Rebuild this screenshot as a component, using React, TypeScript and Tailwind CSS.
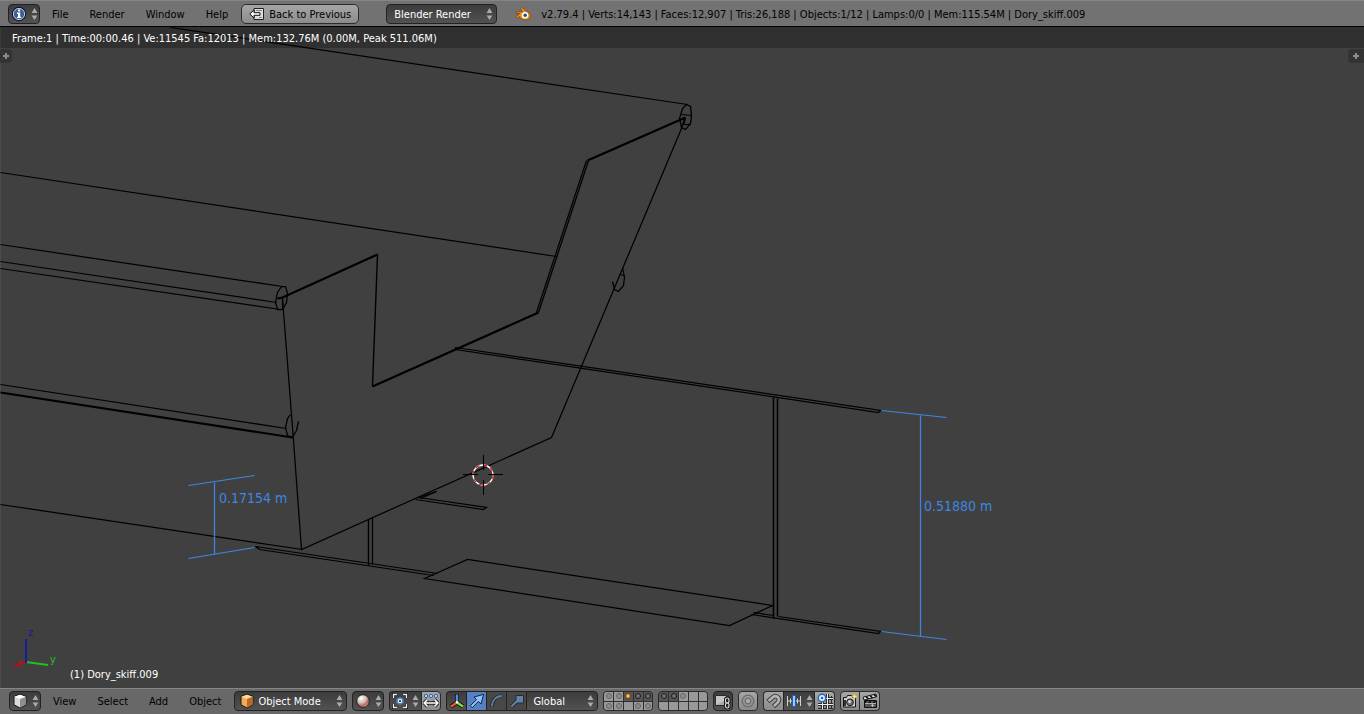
import { useState, type ReactNode } from 'react'
import clsx from 'clsx'

type Point = [number, number]

type Wire = {
  points: Point[]
  width?: number
  closed?: boolean
}

const INFO_MENUS = ['File', 'Render', 'Window', 'Help']
const VIEW_MENUS = ['View', 'Select', 'Add', 'Object']

const WIRES: Wire[] = [
  // gunwale and strakes
  { points: [[170, 27], [687, 104]] },
  { points: [[0, 172], [556, 256]] },
  { points: [[0, 244], [282, 286]] },
  { points: [[0, 261], [276, 302]] },
  { points: [[0, 268], [280, 309]] },
  { points: [[0, 384], [286, 428]] },
  { points: [[0, 392], [292, 437]], width: 2 },
  { points: [[0, 504], [302, 549]] },
  // transom
  { points: [[282, 298], [293, 440], [301, 549], [551, 437], [681, 128], [684, 118]] },
  { points: [[277, 298], [282, 297], [377, 254]], width: 2.2 },
  { points: [[377, 254], [372, 386]], width: 1.4 },
  { points: [[372, 386], [538, 312]], width: 2.2 },
  { points: [[536, 312], [586, 160]] },
  { points: [[538, 312], [588, 160]], width: 1.3 },
  { points: [[587, 160], [685, 117]], width: 2.4 },
  // rails
  { points: [[686, 104], [690, 106], [691, 115], [690, 123], [685, 129], [681, 127], [679, 118], [682, 108]], closed: true, width: 1.3 },
  { points: [[681, 114], [691, 115]] },
  { points: [[683, 124], [690, 124]] },
  { points: [[685, 118], [683, 124]] },
  { points: [[622, 267], [624, 277], [623, 285], [618, 291], [614, 289], [612, 281]] },
  { points: [[619, 274], [624, 275]] },
  { points: [[281, 286], [285, 286], [287, 293], [286, 302], [282, 309], [277, 309], [275, 302], [277, 292]], closed: true },
  { points: [[282, 298], [282, 309]] },
  { points: [[290, 414], [287, 418], [285, 427], [287, 435], [292, 437], [296, 430], [298, 421]] },
  // upper beam
  { points: [[455, 347], [880, 410], [878, 412], [455, 349]], closed: true },
  // posts
  { points: [[773, 397], [773, 618]], width: 1.6 },
  { points: [[777, 398], [777, 616]], width: 1.6 },
  { points: [[368, 519], [368, 565]], width: 1.4 },
  { points: [[372, 517], [372, 564]] },
  // foils
  { points: [[753, 612], [773, 615]] },
  { points: [[778, 616], [880, 631], [878, 633], [751, 614]] },
  { points: [[424, 578], [467, 559], [772, 605], [729, 625]], closed: true },
  { points: [[437, 573], [255, 546], [259, 549], [433, 575]] },
  { points: [[436, 491], [418, 497], [486, 507], [483, 509], [415, 499]] },
  { points: [[436, 491], [420, 498]] },
]

const DIMENSIONS: Wire[] = [
  { points: [[188, 485], [254, 475]] },
  { points: [[214, 482], [214, 554]] },
  { points: [[188, 558], [254, 547]] },
  { points: [[881, 410], [946, 417]] },
  { points: [[920, 415], [920, 636]] },
  { points: [[881, 631], [946, 639]] },
]

// e = empty, o = has objects, A = holds the active object; upper case = visible layer
const LAYER_BLOCKS = ['ooAOOooeoo', 'OOoeeeeeee']

const darkBtn =
  'flex h-5 shrink-0 items-center justify-center border border-[#222] bg-linear-to-b from-[#3c3c3c] to-[#525252] text-white'
const lightBtn =
  'flex h-5 shrink-0 items-center justify-center border border-[#2b2b2b] bg-linear-to-b from-[#a6a6a6] to-[#8c8c8c] text-black'

function Arrows() {
  return (
    <svg width="7" height="14" viewBox="0 0 7 14" className="shrink-0 fill-[#aaa]" aria-hidden="true">
      <path d="M3.5 1 6.4 6H.6zM3.5 13 .6 8.5h5.8z" />
    </svg>
  )
}

function Icon({ children }: { children: ReactNode }) {
  return (
    <svg width="16" height="16" viewBox="0 0 16 16" fill="none" className="shrink-0" aria-hidden="true">
      {children}
    </svg>
  )
}

function InfoIcon() {
  return (
    <Icon>
      <circle cx="8" cy="8" r="6.6" fill="#3c5e94" stroke="#101826" strokeWidth="1.2" />
      <circle cx="8" cy="8" r="5.6" stroke="#b9cbe6" />
      <path d="M7 3.6h2.200v1.900H7zM6 6.500h3.200v4.200h1v1.400H6v-1.400h1V7.900H6z" fill="#fff" />
    </Icon>
  )
}

function BackIcon() {
  return (
    <Icon>
      <path d="M5 2.5h9.5v11H5V10M5 6V2.5" fill="#ddd" stroke="#222" />
      <path d="M7 4.5h6M10 11.5h3" stroke="#888" />
      <path d="M.8 8 5 4v2.7h6v2.6H5V12z" fill="#fff" stroke="#111" />
    </Icon>
  )
}

function BlenderLogo() {
  return (
    <Icon>
      <path
        d="M6.8 1.6 15 7.6c1.8 3.4-.8 6.4-5 6.4-3 0-4.9-1.6-5.2-3.6l-2.6 1.8L.7 11l4.1-3.5H1.200V5.800h6.400L5.400 3z"
        fill="#ef8a1d"
        stroke="#6b3505"
        strokeWidth=".6"
      />
      <circle cx="10" cy="9.2" r="3.2" fill="#fff" />
      <circle cx="10.2" cy="9.2" r="1.8" fill="#1f5390" />
    </Icon>
  )
}

function CubeIcon({ top, left, right }: { top: string; left: string; right: string }) {
  return (
    <Icon>
      <path d="M8 1.2 14 3.4v8.4L8 15l-6-3.2V3.4z" fill={left} stroke="#1a1a1a" />
      <path d="M8 1.7 13.6 3.7 8 6 2.4 3.7z" fill={top} />
      <path d="M8 6 13.6 3.7v7.8L8 14.4z" fill={right} />
    </Icon>
  )
}

function ShadingIcon() {
  return (
    <Icon>
      <defs>
        <radialGradient id="ball" cx=".35" cy=".28" r=".8">
          <stop offset="0" stopColor="#fff" />
          <stop offset=".5" stopColor="#c9b9b4" />
          <stop offset=".75" stopColor="#c0614f" />
          <stop offset="1" stopColor="#ddd" />
        </radialGradient>
      </defs>
      <circle cx="8" cy="8" r="6.3" fill="url(#ball)" stroke="#1c1c1c" />
    </Icon>
  )
}

function PivotIcon() {
  return (
    <Icon>
      <path d="M1.5 5V1.5H5M11 1.5h3.5V5M14.5 11v3.5H11M5 14.5H1.5V11" stroke="#111" strokeWidth="3" />
      <path d="M1.5 5V1.5H5M11 1.5h3.5V5M14.5 11v3.5H11M5 14.5H1.5V11" stroke="#eee" strokeWidth="1.4" />
      <circle cx="8" cy="8" r="3" fill="#e8f0fa" stroke="#4a7fc4" strokeWidth="1.5" />
      <circle cx="8" cy="8" r="1.1" fill="#222" />
    </Icon>
  )
}

function CentersIcon() {
  return (
    <Icon>
      <g fill="#cfe2fb" stroke="#2c5ea5">
        <circle cx="3" cy="3" r="1.6" />
        <circle cx="8" cy="3" r="1.6" />
        <circle cx="13" cy="3" r="1.6" />
      </g>
      <path d="M4.5 6.5 1.2 10l3.3 3.5M11.5 6.5l3.3 3.5-3.3 3.5M1.5 10h13" stroke="#222" strokeWidth="3.4" />
      <path d="M4.5 6.5 1.2 10l3.3 3.5M11.5 6.5l3.3 3.5-3.3 3.5M1.5 10h13" stroke="#fff" strokeWidth="1.6" />
    </Icon>
  )
}

function AxesIcon() {
  return (
    <Icon>
      <path d="M8 1v8.5M8 9.5l-6.2 4M8 9.5l6.2 4" stroke="#111" strokeWidth="4" />
      <path d="M8 1.5V9" stroke="#4d8ff0" strokeWidth="2.4" />
      <path d="M8 9.500l-6 4" stroke="#ee5430" strokeWidth="2.4" />
      <path d="M8 9.500l6 4" stroke="#7fe035" strokeWidth="2.4" />
      <circle cx="8" cy="9.3" r="1.2" fill="#fff" />
    </Icon>
  )
}

function TranslateIcon() {
  return (
    <Icon>
      <path d="M1.3 12.7 7.6 6.6 5 4l9.6-2.6L12 11 9.4 8.4 3.3 14.7z" fill="#8fc0fa" stroke="#0f2545" />
    </Icon>
  )
}

function RotateIcon() {
  return (
    <Icon>
      <path d="M3 14C2.6 7.5 7 2.8 13.5 3" stroke="#262a30" strokeWidth="3.6" />
      <path d="M3 13.5C2.8 7.5 7 3 13 3" stroke="#5f7da6" strokeWidth="1.8" />
    </Icon>
  )
}

function ScaleIcon() {
  return (
    <Icon>
      <path d="M2.5 13.5 8.5 7.5" stroke="#262a30" strokeWidth="4" />
      <path d="M7 2.5h7.5V10H7z" fill="#6282ab" stroke="#262a30" />
      <path d="M2.5 13.5 8.5 7.5" stroke="#6282ab" strokeWidth="2" />
    </Icon>
  )
}

function LockLayersIcon() {
  return (
    <Icon>
      <path d="M.500 2.500h11v10H.500z" fill="#a8a8a8" stroke="#2a2a2a" />
      <path d="M1 3h10v4L1 12z" fill="#c4c4c4" />
      <rect x="10.500" y="5" width="3.500" height="5" rx="1.700" stroke="#111" strokeWidth="3" />
      <rect x="10.500" y="10" width="3.500" height="5" rx="1.700" stroke="#111" strokeWidth="3" />
      <rect x="10.500" y="5" width="3.500" height="5" rx="1.700" stroke="#ddd" strokeWidth="1.200" />
      <rect x="10.500" y="10" width="3.500" height="5" rx="1.700" stroke="#ddd" strokeWidth="1.200" />
    </Icon>
  )
}

function ProportionalIcon() {
  return (
    <Icon>
      <circle cx="8" cy="8" r="5.8" stroke="#6c6c6c" strokeWidth="1.3" />
      <circle cx="8" cy="8" r="2.8" fill="#aaa" stroke="#6c6c6c" strokeWidth="1.2" />
    </Icon>
  )
}

function MagnetIcon() {
  return (
    <Icon>
      <path d="M2 8.500 6.800 4.200c3.600-2.800 8 1.200 5.200 5L7.500 13.500" stroke="#3c3c3c" strokeWidth="4.600" />
      <path d="M2.600 8 6.800 4.200c3.600-2.800 8 1.200 5.200 5L8 13" stroke="#b5b5b5" strokeWidth="2.600" />
    </Icon>
  )
}

function IncrementIcon() {
  return (
    <Icon>
      <path d="M1.5 3v10M4.5 5.5v5M11.5 5.5v5M14.5 3v10M1.5 8h13" stroke="#d2d2d2" />
      <path d="M6.5 2.5h3v11h-3z" fill="#9ccaff" stroke="#1c5fc0" />
    </Icon>
  )
}

function GridSnapIcon() {
  return (
    <Icon>
      <path d="M5.500 7v9M10.500 1v15M7 5.500h9M1 11.500h15" stroke="#2a2a2a" strokeWidth="3" />
      <path d="M14.500 3v13M1 15.500h15" stroke="#2a2a2a" />
      <path d="M5.500 7v9M10.500 1v15M7 5.500h9M1 11.500h15" stroke="#eee" />
      <circle cx="5" cy="5" r="3.700" fill="#e4effc" stroke="#2d69bd" strokeWidth="1.500" />
      <circle cx="5" cy="5" r="1.300" fill="#2d69bd" />
    </Icon>
  )
}

function CameraIcon() {
  return (
    <Icon>
      <path d="M1.500 4.500h3l1-2h4l1 2h3v9.500h-12z" fill="#cfcfcf" stroke="#151515" />
      <path d="M2 7h2v6H2z" fill="#333" />
      <circle cx="8" cy="9.300" r="3.400" fill="#777" stroke="#151515" />
      <circle cx="7.500" cy="8.600" r="1.300" fill="#eee" />
      <path d="M12.500 0l1 2.500 2.500 1-2.500 1-1 2.500-1-2.500-2.500-1 2.500-1z" fill="#ffe680" stroke="#c79a1c" strokeWidth=".5" />
    </Icon>
  )
}

function ClapperIcon() {
  return (
    <Icon>
      <path d="M2.500 7.500h12v7h-12z" fill="#555" stroke="#111" />
      <path d="M1.200 4.200 14 1l.6 2.800L2 7z" fill="#eee" stroke="#111" />
      <path d="M4 3.500l2.400 2.400M8 2.500l2.400 2.400M12 1.500l2 2M4 8l-1.500 2.500M8.500 8 7 10.500M13 8l-1.500 2.500" stroke="#111" strokeWidth="1.700" />
      <path d="M3 10.500h11M10.500 11v3M9 12.500h3" stroke="#ccc" strokeWidth=".8" />
    </Icon>
  )
}

function Menus({ items }: { items: string[] }) {
  return (
    <nav className="flex shrink-0 gap-px">
      {items.map((item) => (
        <button key={item} type="button" className="h-5 px-[10px] pt-[2px] text-black hover:bg-[#5680c2] hover:text-white">
          {item}
        </button>
      ))}
    </nav>
  )
}

function IconMenu({ label, className, children }: { label: string; className?: string; children: ReactNode }) {
  return (
    <button type="button" aria-label={label} aria-haspopup="menu" className={clsx(darkBtn, 'w-8 gap-1', className)}>
      {children}
      <Arrows />
    </button>
  )
}

type DropdownProps = {
  label: string
  options: string[]
  icon?: ReactNode
  className?: string
  selectClass: string
}

function Dropdown({ label, options, icon, className, selectClass }: DropdownProps) {
  return (
    <label className={clsx(darkBtn, 'relative', className)}>
      {icon && <span className="pointer-events-none absolute left-1">{icon}</span>}
      <select aria-label={label} className={clsx('h-full w-full appearance-none bg-transparent pt-[2px] outline-none', selectClass)}>
        {options.map((option) => (
          <option key={option} className="bg-[#333]">
            {option}
          </option>
        ))}
      </select>
      <span className="pointer-events-none absolute right-[3px]">
        <Arrows />
      </span>
    </label>
  )
}

function Layers({ layers, block }: { layers: string; block: number }) {
  return (
    <div className="grid h-5 w-[50px] shrink-0 grid-cols-5 grid-rows-2 gap-px overflow-hidden rounded-[4px] border border-[#2b2b2b] bg-[#2f2f2f]">
      {layers.split('').map((layer, i) => {
        const visible = layer !== layer.toLowerCase()
        return (
          <button
            key={i}
            type="button"
            aria-label={`Layer ${block * 5 + (i % 5) + 1 + (i > 4 ? 10 : 0)}`}
            aria-pressed={visible}
            className={clsx('flex items-center justify-center', visible ? 'bg-[#555]' : 'bg-[#999]')}
          >
            {layer !== 'e' && (
              <span
                className={clsx(
                  'size-[6px] rounded-full border',
                  layer === 'A' && 'border-[#5e3a10] bg-[#ffb450]',
                  layer === 'O' && 'border-[#1c1c1c] bg-[#707070]',
                  layer === 'o' && 'border-[#666] bg-[#8c8c8c]'
                )}
              />
            )}
          </button>
        )
      })}
    </div>
  )
}

function Wires({ wires }: { wires: Wire[] }) {
  return wires.map((wire, i) => {
    const points = wire.points.map((p) => p.join(',')).join(' ')
    return wire.closed ? (
      <polygon key={i} points={points} strokeWidth={wire.width ?? 1.25} />
    ) : (
      <polyline key={i} points={points} strokeWidth={wire.width ?? 1.25} />
    )
  })
}

function Scene() {
  return (
    <svg
      viewBox="0 27 1364 661"
      preserveAspectRatio="xMidYMid slice"
      className="absolute inset-0 h-full w-full"
      fill="none"
      role="img"
      aria-label="Dory skiff wireframe"
    >
      <g transform="translate(.5 .5)" stroke="#000">
        <Wires wires={WIRES} />
      </g>
      <g transform="translate(.5 .5)" stroke="#3f86e0">
        <Wires wires={DIMENSIONS} />
      </g>
      <g fill="#3f86e0" fontSize="14">
        <text x="219" y="503">0.17154 m</text>
        <text x="924" y="511">0.51880 m</text>
      </g>
      {/* 3D cursor */}
      <circle cx="483" cy="475" r="10" stroke="#fff" strokeWidth="1.300" />
      <circle cx="483" cy="475" r="10" stroke="#e0202c" strokeWidth="1.300" strokeDasharray="3.900 3.950" />
      <path d="M463 474.500h15M488 474.500h15M483.500 455v15M483.500 480v15" stroke="#000" />
    </svg>
  )
}

function AxisGizmo() {
  return (
    <svg width="60" height="50" viewBox="0 0 60 50" fill="none" className="absolute bottom-[13px] left-0" aria-hidden="true">
      <path d="M26 37 14 42" stroke="#b01616" strokeWidth="2" />
      <path d="M26 37 48 40" stroke="#1fc01f" strokeWidth="2" />
      <path d="M26 38V14" stroke="#1a1a9c" strokeWidth="2" />
      <g fontSize="11">
        <text x="16" y="41" fill="#b01616">x</text>
        <text x="28" y="11" fill="#1a1a9c">z</text>
        <text x="50" y="38" fill="#1fc01f">y</text>
      </g>
    </svg>
  )
}

function RegionTab({ label, className }: { label: string; className: string }) {
  return (
    <button
      type="button"
      aria-label={label}
      className={clsx('absolute top-[22px] flex h-[14px] items-center justify-center bg-[#333]', className)}
    >
      <svg width="8" height="8" viewBox="0 0 8 8" stroke="#8c8c8c" strokeWidth="2" aria-hidden="true">
        <path d="M4 1v6M1 4h6" />
      </svg>
    </button>
  )
}

const MANIPULATORS = [
  { name: 'Translate', icon: <TranslateIcon /> },
  { name: 'Rotate', icon: <RotateIcon /> },
  { name: 'Scale', icon: <ScaleIcon /> },
]

export default function App() {
  const [manipulator, setManipulator] = useState('Translate')

  return (
    <div className="flex h-screen flex-col overflow-hidden bg-[#404040] font-['DejaVu_Sans_Condensed','DejaVu_Sans',sans-serif] text-[11px] leading-4 whitespace-nowrap">
      {/* Info header */}
      <header className="flex h-[27px] shrink-0 items-center border-t border-b border-t-[#858585] border-b-black bg-[#727272] pt-px pl-2">
        <IconMenu label="Editor type: Info" className="mr-[2px] rounded-[4px]">
          <InfoIcon />
        </IconMenu>
        <Menus items={INFO_MENUS} />
        <button type="button" className={clsx(lightBtn, 'ml-[3px] w-[118px] gap-1 rounded-[5px]')}>
          <BackIcon />
          <span className="pt-[2px]">Back to Previous</span>
        </button>
        <Dropdown
          label="Render engine"
          options={['Blender Render', 'Blender Game', 'Cycles Render']}
          className="ml-[27px] w-[111px] rounded-[4px]"
          selectClass="pl-[7px]"
        />
        <div className="ml-[18px] flex items-center gap-[10px]">
          <BlenderLogo />
          <span className="pt-[2px]">v2.79.4 | Verts:14,143 | Faces:12,907 | Tris:26,188 | Objects:1/12 | Lamps:0/0 | Mem:115.54M | Dory_skiff.009</span>
        </div>
      </header>

      {/* 3D view */}
      <main className="relative min-h-0 flex-1 shadow-[inset_1px_0_#4c4c4c]">
        <Scene />
        <div className="relative flex h-[21px] items-center bg-black/25 pt-[2px] pl-3 text-white">
          Frame:1 | Time:00:00.46 | Ve:11545 Fa:12013 | Mem:132.76M (0.00M, Peak 511.06M)
        </div>
        <RegionTab label="Show tool shelf" className="left-0 w-3 rounded-r-[4px]" />
        <RegionTab label="Show properties" className="right-0 w-4 rounded-l-[4px]" />
        <AxisGizmo />
        <span className="absolute bottom-[5px] left-[70px] text-white">(1) Dory_skiff.009</span>
      </main>

      {/* 3D view header */}
      <footer className="flex h-[26px] shrink-0 items-center border-t border-[#858585] bg-[#686868] pb-px pl-[9px]">
        <IconMenu label="Editor type: 3D View" className="mr-[2px] rounded-[4px]">
          <CubeIcon top="#fff" left="#d9d9d9" right="#8f8f8f" />
        </IconMenu>
        <Menus items={VIEW_MENUS} />
        <Dropdown
          label="Mode"
          options={['Object Mode', 'Edit Mode', 'Sculpt Mode']}
          icon={<CubeIcon top="#ffd9a4" left="#f3a95a" right="#b86b22" />}
          className="ml-[3px] w-[113px] rounded-[4px]"
          selectClass="pl-[23px]"
        />
        <IconMenu label="Viewport shading" className="ml-[5px] rounded-[4px]">
          <ShadingIcon />
        </IconMenu>

        <div className="ml-[5px] flex">
          <IconMenu label="Pivot point" className="rounded-l-[4px] border-r-0">
            <PivotIcon />
          </IconMenu>
          <button type="button" aria-label="Manipulate center points" className={clsx(lightBtn, 'w-5 rounded-r-[4px]')}>
            <CentersIcon />
          </button>
        </div>

        <div className="ml-[5px] flex">
          <button type="button" aria-label="Show manipulator" className={clsx(darkBtn, 'w-5 rounded-l-[4px] border-r-0')}>
            <AxesIcon />
          </button>
          {MANIPULATORS.map(({ name, icon }) => (
            <button
              key={name}
              type="button"
              aria-label={name}
              aria-pressed={manipulator === name}
              onClick={() => setManipulator(name)}
              className={clsx(
                'flex h-5 w-5 items-center justify-center border border-r-0 border-[#222]',
                manipulator === name ? 'bg-[#5680c2]' : 'bg-[#484848]'
              )}
            >
              {icon}
            </button>
          ))}
          <Dropdown
            label="Transform orientation"
            options={['Global', 'Local', 'Normal', 'View']}
            className="w-[72px] rounded-r-[4px]"
            selectClass="pl-[6px]"
          />
        </div>

        <div className="ml-[5px] flex gap-[5px]">
          {LAYER_BLOCKS.map((layers, i) => (
            <Layers key={i} layers={layers} block={i} />
          ))}
          <button type="button" aria-label="Lock camera and layers" className={clsx(darkBtn, 'w-5 rounded-[4px]')}>
            <LockLayersIcon />
          </button>
          <button type="button" aria-label="Proportional editing" className={clsx(lightBtn, 'w-5 rounded-[4px]')}>
            <ProportionalIcon />
          </button>
          <div className="flex">
            <button type="button" aria-label="Snap" className={clsx(lightBtn, 'w-5 rounded-l-[4px] border-r-0')}>
              <MagnetIcon />
            </button>
            <IconMenu label="Snap element">
              <IncrementIcon />
            </IconMenu>
            <button type="button" aria-label="Absolute grid snap" className={clsx(lightBtn, 'w-5 rounded-r-[4px] border-l-0')}>
              <GridSnapIcon />
            </button>
          </div>
          <div className="flex">
            <button type="button" aria-label="Render image" className={clsx(lightBtn, 'w-5 rounded-l-[4px]')}>
              <CameraIcon />
            </button>
            <button type="button" aria-label="Render animation" className={clsx(lightBtn, 'w-5 rounded-r-[4px] border-l-0')}>
              <ClapperIcon />
            </button>
          </div>
        </div>
      </footer>
    </div>
  )
}
